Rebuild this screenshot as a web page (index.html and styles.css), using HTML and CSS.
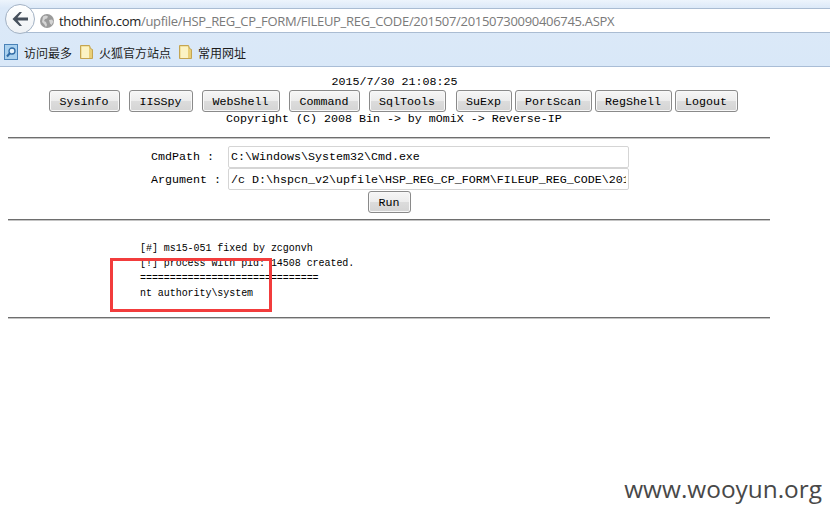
FILE: index.html
```html
<!DOCTYPE html>
<html lang="zh">
<head>
<meta charset="utf-8">
<title>thothinfo.com</title>
<link rel="stylesheet" href="styles.css">
</head>
<body>
<header class="chrome">
  <div class="navrow">
    <div class="urlbar">
      <svg class="globe" width="16" height="16" viewBox="0 0 16 16"><circle cx="8" cy="8" r="7" fill="#9a9a9a"/><path d="M4 3.5l3-1 2 1-1 2-2 .5-1 2 2 1 1 3-1 2-2-3-2-2zM10 7l3-.5 1.500 2-2 3.500-1.500-1.500z" fill="#d4d4d4"/></svg>
      <span class="url"><span class="host">thothinfo.com</span>/upfile/HSP_REG_CP_FORM/FILEUP_REG_CODE/201507/20150730090406745.ASPX</span>
    </div>
    <div class="back">
      <svg width="18" height="16" viewBox="0 0 18 16"><path d="M8.500 1L1.500 8l7 7h2.500L6.500 9.500H17v-3H6.500L11 1z" fill="#46505c"/></svg>
    </div>
  </div>
  <nav class="bookmarks">
    <span class="mark">
      <svg width="15" height="16" viewBox="0 0 15 16"><rect x=".5" y=".5" width="13" height="15" fill="#a9d0ee" stroke="#4a82b8"/><circle cx="8" cy="7" r="3" fill="#e8f3fb" stroke="#2f6aa5" stroke-width="1.300"/><path d="M6 9l-3 3.500" stroke="#2f6aa5" stroke-width="2"/></svg>
      访问最多
    </span>
    <span class="mark">
      <svg width="15" height="16" viewBox="0 0 15 16"><path d="M1.500 1.500h9l1 3 2 1v9h-12z" fill="#e9cf78" stroke="#c4a552"/><path d="M2.500 2.500h7.500v11.500h-7.500z" fill="#fbf3c4"/></svg>
      火狐官方站点
    </span>
    <span class="mark">
      <svg width="15" height="16" viewBox="0 0 15 16"><path d="M1.500 1.500h9l1 3 2 1v9h-12z" fill="#e9cf78" stroke="#c4a552"/><path d="M2.500 2.500h7.500v11.500h-7.500z" fill="#fbf3c4"/></svg>
      常用网址
    </span>
  </nav>
</header>
<main class="page">
  <div class="clock">2015/7/30 21:08:25</div>
  <div class="menu">
    <button class="btn w71">Sysinfo</button>
    <button class="btn w64">IISSpy</button>
    <button class="btn w78">WebShell</button>
    <button class="btn w71">Command</button>
    <button class="btn w77">SqlTools</button>
    <button class="btn w56 near">SuExp</button>
    <button class="btn w77 tight">PortScan</button>
    <button class="btn w77 tight">RegShell</button>
    <button class="btn w63 tight">Logout</button>
  </div>
  <div class="copy">Copyright (C) 2008 Bin -&gt; by mOmiX -&gt; Reverse-IP</div>
  <hr class="rule first">
  <form class="cmd">
    <div class="row"><label class="lbl">CmdPath :</label><input class="field" value="C:\Windows\System32\Cmd.exe"></div>
    <div class="row"><label class="lbl">Argument :</label><input class="field" value="/c D:\hspcn_v2\upfile\HSP_REG_CP_FORM\FILEUP_REG_CODE\201507\20150730090406745.ASPX"></div>
    <div class="runrow"><button type="button" class="btn run">Run</button></div>
  </form>
  <hr class="rule">
  <pre class="out">[#] ms15-051 fixed by zcgonvh
[!] process with pid: 14508 created.
==============================
nt authority\system</pre>
  <hr class="rule">
  <div class="redbox"></div>
</main>
<div class="mark-wm">www.wooyun.org</div>
</body>
</html>
```
FILE: styles.css
```css
* { box-sizing: border-box; }
html, body { margin: 0; padding: 0; height: 519px; overflow: hidden; background: #fff; }
body { position: relative; font-family: "Liberation Mono", monospace; color: #000; }

.chrome {
  height: 67px;
  background: linear-gradient(#edf4fc 0, #dce9f8 8px, #d9e8f8 100%);
  border-bottom: 1px solid #a9bdd6;
  padding-top: 8px;
}
.navrow { position: relative; height: 25px; }
.urlbar {
  height: 25px;
  margin-left: 20px;
  background: #fff;
  border-top: 1px solid #aabcd2;
  border-bottom: 1px solid #aabcd2;
  display: flex;
  align-items: center;
  padding-left: 19px;
}
.globe { flex: none; }
.url { margin-left: 4px; font: 13px "Open Sans", sans-serif; color: #7a7a7a; white-space: nowrap; letter-spacing: -.31px; }
.host { color: #222; }
.back {
  position: absolute;
  left: 5px;
  top: -4px;
  width: 30px;
  height: 30px;
  border-radius: 50%;
  background: linear-gradient(#fff, #eef1f5);
  border: 1px solid #a3b2c4;
  display: flex;
  align-items: center;
  justify-content: center;
}
.bookmarks {
  display: flex;
  gap: 7px;
  padding: 11px 0 0 4px;
  font: 12px "Noto Sans CJK SC", sans-serif;
  color: #1c1c1c;
}
.mark { display: flex; align-items: center; gap: 5px; height: 16px; white-space: nowrap; }

.page { position: relative; padding: 8px 0 0 8px; width: 770px; font-size: 11.67px; }
.clock { height: 15px; line-height: 15px; padding-left: 323.500px; }
.menu { display: flex; height: 23px; padding-left: 41px; gap: 9px; }
.btn {
  height: 22px;
  padding: 1px 1px 0 0;
  font: 11.67px "Liberation Mono", monospace;
  color: #000;
  background: linear-gradient(#f6f6f6 0, #ececec 50%, #dcdcdc 52%, #d4d4d4 100%);
  border: 1px solid #8a8a8a;
  border-radius: 3px;
  box-shadow: inset 0 0 0 1px #f8f8f8;
}
.w71 { width: 71px; }
.w64 { width: 64px; }
.w78 { width: 78px; }
.w77 { width: 77px; }
.w56 { width: 56px; }
.w63 { width: 63px; }
.near { margin-left: 1px; }
.tight { margin-left: -6px; }
.copy { height: 14px; line-height: 13px; padding-left: 218px; }

.rule { margin: 0; border: 0; height: 1px; background: #6e6e6e; box-shadow: 0 1px 0 #c4c4c4; }
.first { margin-top: 10px; }
.cmd { padding: 7px 0 0 143px; height: 81px; }
.row { display: flex; align-items: center; height: 23px; }
.row + .row { height: 22px; }
.lbl { width: 77px; white-space: pre; padding-top: 1px; }
.field {
  width: 401px;
  height: 22px;
  padding: 1px 2px 0;
  font: 11.67px "Liberation Mono", monospace;
  color: #000;
  border: 1px solid #d5d5d5;
  border-radius: 2px;
  background: #fff;
}
.runrow { padding: 1px 0 0 217px; }
.run { width: 43px; }
.out {
  margin: 0;
  padding: 21px 0 0 132px;
  height: 97px;
  font: 10px/15px "Liberation Mono", monospace;
  letter-spacing: -.05px;
}
.redbox {
  position: absolute;
  left: 110px;
  top: 191px;
  width: 162px;
  height: 54px;
  border: 3px solid #f23c3c;
}
.mark-wm {
  position: absolute;
  right: 8px;
  bottom: 14px;
  font: 24.4px "Open Sans", sans-serif;
  color: #484848;
}
```
